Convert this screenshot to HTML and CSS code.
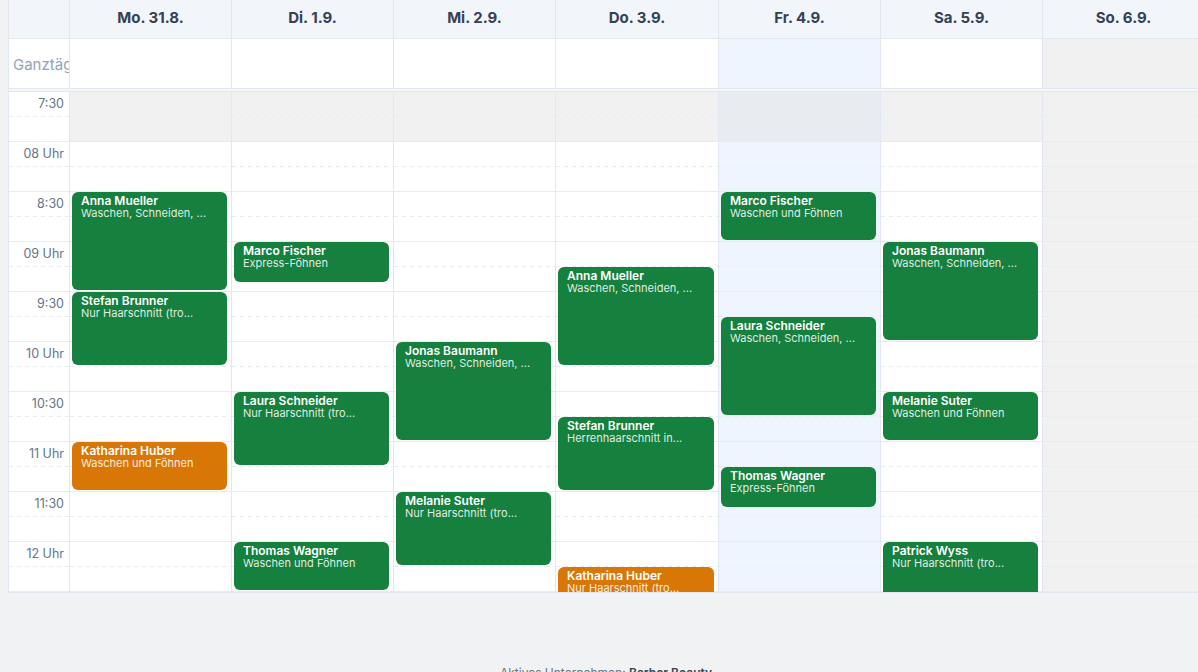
FILE: index.html
```html
<!DOCTYPE html>
<html>
<head>
    <meta charset="utf-8">
    <link rel="stylesheet" href="styles.css">
</head>
<body>
    <div class="calendar">
        <div class="cal-row cal-head">
            <div class="gutter"></div>
            <div class="day-head">Mo. 31.8.</div>
            <div class="day-head">Di. 1.9.</div>
            <div class="day-head">Mi. 2.9.</div>
            <div class="day-head">Do. 3.9.</div>
            <div class="day-head">Fr. 4.9.</div>
            <div class="day-head">Sa. 5.9.</div>
            <div class="day-head">So. 6.9.</div>
        </div>

        <div class="cal-row cal-allday">
            <div class="gutter allday-label">Ganztägig</div>
            <div class="allday-cell"></div>
            <div class="allday-cell"></div>
            <div class="allday-cell"></div>
            <div class="allday-cell"></div>
            <div class="allday-cell today"></div>
            <div class="allday-cell"></div>
            <div class="allday-cell closed"></div>
        </div>

        <div class="cal-divider"></div>

        <div class="cal-scroll">
            <div class="cal-row cal-body">
                <div class="gutter times">
                    <div class="slot"><span>7:30</span></div>
                    <div class="slot"><span>08 Uhr</span></div>
                    <div class="slot"><span>8:30</span></div>
                    <div class="slot"><span>09 Uhr</span></div>
                    <div class="slot"><span>9:30</span></div>
                    <div class="slot"><span>10 Uhr</span></div>
                    <div class="slot"><span>10:30</span></div>
                    <div class="slot"><span>11 Uhr</span></div>
                    <div class="slot"><span>11:30</span></div>
                    <div class="slot"><span>12 Uhr</span></div>
                </div>

                <!-- Montag -->
                <div class="day">
                    <div class="slot off"></div><div class="slot"></div><div class="slot"></div><div class="slot"></div>
                    <div class="slot"></div><div class="slot"></div><div class="slot"></div><div class="slot"></div>
                    <div class="slot"></div><div class="slot"></div>
                    <div class="event" style="top: 100px; height: 98px">
                        <div class="ev-name">Anna Mueller</div>
                        <div class="ev-service">Waschen, Schneiden, ...</div>
                    </div>
                    <div class="event" style="top: 200px; height: 73px">
                        <div class="ev-name">Stefan Brunner</div>
                        <div class="ev-service">Nur Haarschnitt (tro...</div>
                    </div>
                    <div class="event pending" style="top: 350px; height: 48px">
                        <div class="ev-name">Katharina Huber</div>
                        <div class="ev-service">Waschen und Föhnen</div>
                    </div>
                </div>

                <!-- Dienstag -->
                <div class="day">
                    <div class="slot off"></div><div class="slot"></div><div class="slot"></div><div class="slot"></div>
                    <div class="slot"></div><div class="slot"></div><div class="slot"></div><div class="slot"></div>
                    <div class="slot"></div><div class="slot"></div>
                    <div class="event" style="top: 150px; height: 39.7px">
                        <div class="ev-name">Marco Fischer</div>
                        <div class="ev-service">Express-Föhnen</div>
                    </div>
                    <div class="event" style="top: 300px; height: 73px">
                        <div class="ev-name">Laura Schneider</div>
                        <div class="ev-service">Nur Haarschnitt (tro...</div>
                    </div>
                    <div class="event" style="top: 450px; height: 48px">
                        <div class="ev-name">Thomas Wagner</div>
                        <div class="ev-service">Waschen und Föhnen</div>
                    </div>
                </div>

                <!-- Mittwoch -->
                <div class="day">
                    <div class="slot off"></div><div class="slot"></div><div class="slot"></div><div class="slot"></div>
                    <div class="slot"></div><div class="slot"></div><div class="slot"></div><div class="slot"></div>
                    <div class="slot"></div><div class="slot"></div>
                    <div class="event" style="top: 250px; height: 98px">
                        <div class="ev-name">Jonas Baumann</div>
                        <div class="ev-service">Waschen, Schneiden, ...</div>
                    </div>
                    <div class="event" style="top: 400px; height: 73px">
                        <div class="ev-name">Melanie Suter</div>
                        <div class="ev-service">Nur Haarschnitt (tro...</div>
                    </div>
                </div>

                <!-- Donnerstag -->
                <div class="day">
                    <div class="slot off"></div><div class="slot"></div><div class="slot"></div><div class="slot"></div>
                    <div class="slot"></div><div class="slot"></div><div class="slot"></div><div class="slot"></div>
                    <div class="slot"></div><div class="slot"></div>
                    <div class="event" style="top: 175px; height: 98px">
                        <div class="ev-name">Anna Mueller</div>
                        <div class="ev-service">Waschen, Schneiden, ...</div>
                    </div>
                    <div class="event" style="top: 325px; height: 73px">
                        <div class="ev-name">Stefan Brunner</div>
                        <div class="ev-service">Herrenhaarschnitt in...</div>
                    </div>
                    <div class="event pending" style="top: 475px; height: 48px">
                        <div class="ev-name">Katharina Huber</div>
                        <div class="ev-service">Nur Haarschnitt (tro...</div>
                    </div>
                </div>

                <!-- Freitag (heute) -->
                <div class="day today">
                    <div class="slot off"></div><div class="slot"></div><div class="slot"></div><div class="slot"></div>
                    <div class="slot"></div><div class="slot"></div><div class="slot"></div><div class="slot"></div>
                    <div class="slot"></div><div class="slot"></div>
                    <div class="event" style="top: 100px; height: 48px">
                        <div class="ev-name">Marco Fischer</div>
                        <div class="ev-service">Waschen und Föhnen</div>
                    </div>
                    <div class="event" style="top: 225px; height: 98px">
                        <div class="ev-name">Laura Schneider</div>
                        <div class="ev-service">Waschen, Schneiden, ...</div>
                    </div>
                    <div class="event" style="top: 375px; height: 39.7px">
                        <div class="ev-name">Thomas Wagner</div>
                        <div class="ev-service">Express-Föhnen</div>
                    </div>
                </div>

                <!-- Samstag -->
                <div class="day">
                    <div class="slot off"></div><div class="slot"></div><div class="slot"></div><div class="slot"></div>
                    <div class="slot"></div><div class="slot"></div><div class="slot"></div><div class="slot"></div>
                    <div class="slot"></div><div class="slot"></div>
                    <div class="event" style="top: 150px; height: 98px">
                        <div class="ev-name">Jonas Baumann</div>
                        <div class="ev-service">Waschen, Schneiden, ...</div>
                    </div>
                    <div class="event" style="top: 300px; height: 48px">
                        <div class="ev-name">Melanie Suter</div>
                        <div class="ev-service">Waschen und Föhnen</div>
                    </div>
                    <div class="event" style="top: 450px; height: 73px">
                        <div class="ev-name">Patrick Wyss</div>
                        <div class="ev-service">Nur Haarschnitt (tro...</div>
                    </div>
                </div>

                <!-- Sonntag (geschlossen) -->
                <div class="day closed">
                    <div class="slot"></div><div class="slot"></div><div class="slot"></div><div class="slot"></div>
                    <div class="slot"></div><div class="slot"></div><div class="slot"></div><div class="slot"></div>
                    <div class="slot"></div><div class="slot"></div>
                </div>
            </div>
        </div>
    </div>

    <footer class="footer">
        Aktives Unternehmen: <strong>Barber Beauty</strong>
    </footer>
</body>
</html>
```

FILE: styles.css
```css
html, body {
    overflow: hidden;
}

body {
    font-family: Inter, "Noto Sans", Arial, sans-serif;
    margin: 0;
    background: #f1f2f4;
    color: #334155;
}

.calendar {
    width: 1197px;
    margin-left: 8px;
    background: white;
    border-left: 1px solid #e2e8f0;
}

.cal-row {
    display: grid;
    grid-template-columns: 61px 162px 162px 162px 163px 162px 162px 162px;
}

.cal-row > div {
    box-sizing: border-box;
    border-right: 1px solid #e2e8f0;
}

/* Kopfzeile mit Wochentagen */
.cal-head {
    height: 39px;
    background: #f2f5f9;
    border-bottom: 1px solid #e2e8f0;
    box-sizing: border-box;
}

.day-head {
    display: flex;
    align-items: center;
    justify-content: center;
    padding-bottom: 4px;
    font-size: 15px;
    font-weight: 700;
    color: #334155;
}

/* Ganztägige Termine */
.cal-allday {
    height: 50px;
    border-bottom: 1px solid #e2e8f0;
    box-sizing: border-box;
}

.allday-label {
    overflow: hidden;
    white-space: nowrap;
    padding: 16px 0 0 4px;
    font-size: 15px;
    color: #94a3b8;
}

.allday-cell.today {
    background: #eff5fe;
}

.allday-cell.closed {
    background: #f1f1f1;
}

.cal-divider {
    height: 3px;
    background: #f4f6f9;
    border-bottom: 1px solid #e2e8f0;
    box-sizing: border-box;
}

/* Zeitraster */
.cal-scroll {
    height: 500px;
    overflow: hidden;
    border-bottom: 1px solid #e2e8f0;
}

.slot {
    height: 50px;
    box-sizing: border-box;
    border-bottom: 1px solid #e8ecf1;
    background-image: linear-gradient(to right, #e8ebef 50%, transparent 50%);
    background-size: 8px 1px;
    background-repeat: repeat-x;
    background-position: 0 24px;
}

.times .slot {
    text-align: right;
    padding: 4px 5px 0 0;
    font-size: 12.5px;
    color: #64748b;
}

.day {
    position: relative;
}

.day .slot.off {
    background-color: #f1f1f1;
}

.day.today {
    background: #eff5fe;
}

.day.today .slot.off {
    background-color: #e8ebef;
}

.day.closed {
    background: #f1f1f1;
}

/* Termine */
.event {
    position: absolute;
    left: 2px;
    right: 4px;
    box-sizing: border-box;
    padding: 1px 9px;
    background: #16803e;
    border-radius: 6px;
    color: white;
    overflow: hidden;
}

.event.pending {
    background: #d97706;
}

.ev-name {
    font-size: 12px;
    font-weight: 600;
    line-height: 15px;
}

.ev-service {
    font-size: 11px;
    line-height: 11px;
    color: rgba(255, 255, 255, 0.88);
}

.footer {
    padding-top: 72px;
    text-align: center;
    padding-left: 14px;
    font-size: 12px;
    color: #6b7280;
}

.footer strong {
    color: #374151;
    font-weight: 600;
}
```
